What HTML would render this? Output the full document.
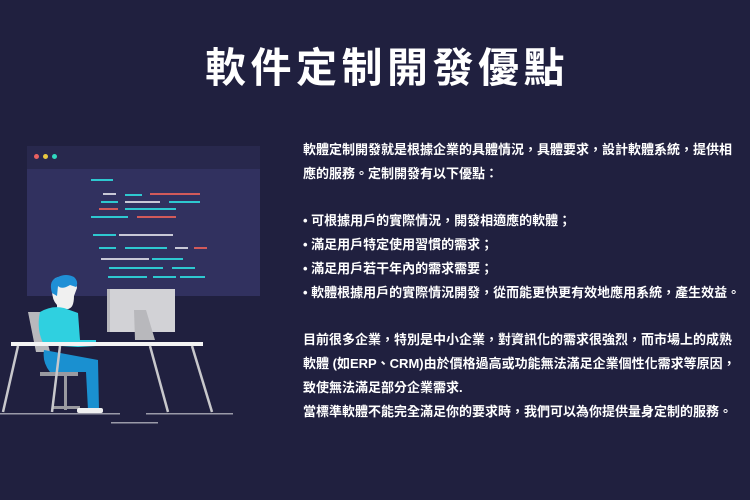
<!DOCTYPE html>
<html><head><meta charset="utf-8"><style>
body{margin:0;width:750px;height:500px;background:#20203f;overflow:hidden;position:relative;font-family:"Liberation Sans","Noto Sans CJK TC",sans-serif}
h1{position:absolute;top:43px;left:12px;width:750px;text-align:center;margin:0;color:#fff;font-size:41px;font-weight:bold;letter-spacing:4.5px;line-height:50px}
.t{position:absolute;left:303px;top:138px;width:437px;color:#fff;font-size:13px;font-weight:bold;line-height:23.8px}
.t p{margin:0}
.l{position:absolute;height:1.5px}
.c{background:#2ec8d0}.w{background:#c8c8d6}.r{background:#d25a5a}
.a{position:absolute}
</style></head><body>
<h1>軟件定制開發優點</h1>
<div class="a" style="left:27px;top:146px;width:233px;height:150px;background:#31315f"></div>
<div class="a" style="left:27px;top:146px;width:233px;height:23px;background:#28284d"></div>
<div class="a" style="left:34px;top:154px;width:5px;height:5px;border-radius:50%;background:#e86060"></div>
<div class="a" style="left:43px;top:154px;width:5px;height:5px;border-radius:50%;background:#e8c840"></div>
<div class="a" style="left:52px;top:154px;width:5px;height:5px;border-radius:50%;background:#30d8c0"></div>
<div class="l c" style="left:91px;width:22px;top:179px"></div>
<div class="l w" style="left:103px;width:13px;top:193px"></div><div class="l c" style="left:125px;width:17px;top:194px"></div><div class="l r" style="left:150px;width:50px;top:193px"></div>
<div class="l c" style="left:101px;width:17px;top:201px"></div><div class="l w" style="left:125px;width:35px;top:201px"></div><div class="l c" style="left:169px;width:31px;top:201px"></div>
<div class="l r" style="left:99px;width:19px;top:208px"></div><div class="l c" style="left:125px;width:51px;top:208px"></div>
<div class="l c" style="left:91px;width:37px;top:216px"></div><div class="l r" style="left:137px;width:39px;top:216px"></div>
<div class="l c" style="left:93px;width:23px;top:234px"></div><div class="l w" style="left:119px;width:54px;top:234px"></div>
<div class="l c" style="left:99px;width:17px;top:247px"></div><div class="l c" style="left:125px;width:42px;top:247px"></div><div class="l w" style="left:175px;width:13px;top:247px"></div><div class="l r" style="left:194px;width:13px;top:247px"></div>
<div class="l w" style="left:101px;width:48px;top:258px"></div><div class="l c" style="left:152px;width:31px;top:258px"></div>
<div class="l c" style="left:109px;width:54px;top:267px"></div><div class="l c" style="left:172px;width:23px;top:267px"></div>
<div class="l c" style="left:108px;width:39px;top:276px"></div><div class="l c" style="left:153px;width:23px;top:276px"></div><div class="l c" style="left:180px;width:25px;top:276px"></div>
<svg class="a" style="left:0;top:270px" width="260" height="160" viewBox="0 270 260 160">
<rect x="107" y="289" width="68" height="43" fill="#d2d2d6"/>
<rect x="107" y="289" width="3" height="43" fill="#b8b8bc"/>
<polygon points="134,310 146,310 155,340 135,340" fill="#b8b8bc"/>
<polygon points="28,312 40,312 50,352 36,352" fill="#b8b8bc"/>
<rect x="40" y="372" width="38" height="4" fill="#9a9aa0"/>
<rect x="64" y="376" width="3" height="34" fill="#9a9aa0"/>
<rect x="52" y="406" width="28" height="3" fill="#9a9aa0"/>
<path d="M52,290 Q50,276 62,277 Q76,276 77,288 L74,296 Q74,310 66,309 L64,318 L57,318 L57,305 Q52,300 52,290Z" fill="#f0f0f0"/>
<path d="M52,293 Q48,280 58,277 Q66,273 74,277 Q79,282 76,287 L70,285 Q62,290 58,286 L57,296Z" fill="#1f8fd6"/>
<path d="M40,312 Q52,305 64,308 L78,313 L80,340 L96,340 L96,346 L78,347 L44,345 Q36,330 40,312Z" fill="#2fd0e0"/>
<path d="M44,350 L98,360 L99,410 L88,410 L86,372 L50,372 Q42,362 44,350Z" fill="#1a90d0"/>
<rect x="77" y="408" width="26" height="5" fill="#f0f0f0" rx="2"/>
<rect x="11" y="342" width="192" height="4" fill="#f4f4f4"/>
<line x1="18" y1="346" x2="3" y2="412" stroke="#c8c8cc" stroke-width="2.5"/>
<line x1="60" y1="346" x2="52" y2="412" stroke="#c8c8cc" stroke-width="2.5"/>
<line x1="150" y1="346" x2="168" y2="412" stroke="#c8c8cc" stroke-width="2.5"/>
<line x1="192" y1="346" x2="212" y2="412" stroke="#c8c8cc" stroke-width="2.5"/>
<rect x="0" y="413" width="120" height="1.5" fill="#9a9aa8"/>
<rect x="146" y="413" width="87" height="1.5" fill="#9a9aa8"/>
<rect x="111" y="422" width="47" height="1.5" fill="#9a9aa8"/>
</svg>
<div class="t">
<p>軟體定制開發就是根據企業的具體情況，具體要求，設計軟體系統，提供相應的服務。定制開發有以下優點：</p>
<p>&nbsp;</p>
<p>• 可根據用戶的實際情況，開發相適應的軟體；</p>
<p>• 滿足用戶特定使用習慣的需求；</p>
<p>• 滿足用戶若干年內的需求需要；</p>
<p style="white-space:nowrap">• 軟體根據用戶的實際情況開發，從而能更快更有效地應用系統，產生效益。</p>
<p>&nbsp;</p>
<p>目前很多企業，特別是中小企業，對資訊化的需求很強烈，而市場上的成熟<br>軟體 (如ERP、CRM)由於價格過高或功能無法滿足企業個性化需求等原因，<br>致使無法滿足部分企業需求.</p>
<p style="white-space:nowrap">當標準軟體不能完全滿足你的要求時，我們可以為你提供量身定制的服務。</p>
</div>
</body></html>
